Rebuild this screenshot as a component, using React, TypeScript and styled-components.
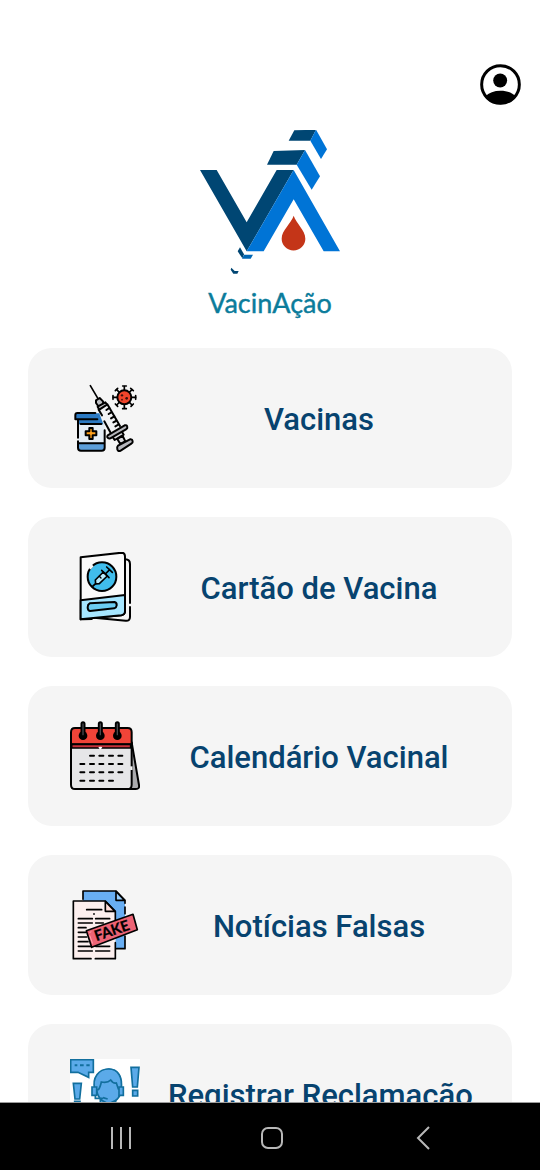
import React from 'react';
import styled, { createGlobalStyle } from 'styled-components';

const GlobalStyle = createGlobalStyle`
  *, *::before, *::after { box-sizing: border-box; }
  body { margin: 0; background: #ffffff; font-family: Roboto, sans-serif; }
`;

const Screen = styled.div`
  display: flex;
  flex-direction: column;
  height: 100vh;
  background: #ffffff;
`;

const Content = styled.main`
  flex: 1;
  min-height: 0;
  overflow-y: auto;
  scrollbar-width: none;
  padding: 64px 28px 28px;
`;

const TopBar = styled.header`
  display: flex;
  justify-content: flex-end;
  margin-right: -9px;
`;

const IconButton = styled.button`
  display: flex;
  padding: 0;
  border: 0;
  background: none;
  cursor: pointer;
`;

const Brand = styled.div`
  display: flex;
  flex-direction: column;
  align-items: center;
  gap: 12px;
  margin: 25px 0 29px;
`;

const BrandName = styled.h1`
  margin: 0;
  font: 400 27px/32px Lato, sans-serif;
  color: #0b7c9b;
  -webkit-text-stroke: 0.4px #0b7c9b;
`;

const Menu = styled.nav`
  display: flex;
  flex-direction: column;
  gap: 29px;
`;

const Card = styled.button`
  display: flex;
  align-items: center;
  gap: 28px;
  width: 100%;
  height: 140px;
  padding: 0 42px;
  border: 0;
  border-radius: 24px;
  background: #f5f5f5;
  cursor: pointer;
`;

const CardIcon = styled.svg`
  flex: none;
  width: 70px;
  height: 70px;
`;

const CardLabel = styled.span`
  flex: 1;
  padding-top: 4px;
  text-align: center;
  white-space: nowrap;
  font: 500 31px/36px Roboto, sans-serif;
  color: #07436f;
`;

const SystemBar = styled.footer`
  display: flex;
  flex: none;
  height: 68px;
  padding: 0 41px 0 45px;
  border-top: 1px solid #9b9b9b;
  background: #000000;
`;

const SystemButton = styled(IconButton)`
  flex: 1;
  align-items: center;
  justify-content: center;
  padding-top: 3px;
`;

const ProfileIcon = () => (
  <svg width="41" height="41" viewBox="45 43 124 124" aria-hidden="true">
    <defs>
      <clipPath id="profile-ring"><circle cx="107" cy="105" r="60" /></clipPath>
    </defs>
    <circle cx="107" cy="105" r="57" fill="#fff" stroke="#000" strokeWidth="9" />
    <circle cx="106" cy="93" r="21" />
    <path d="M60 142C72 130 88 124 107 124S142 130 154 142L140 170H74Z" clipPath="url(#profile-ring)" />
  </svg>
);

const Logo = () => (
  <svg width="140" height="145" viewBox="30 30 420 435" aria-hidden="true">
    <path fill="#004673" d="M30 150H80L170 307L260 150H311L170 394Z" />
    <path fill="#0074d6" d="M311 150L450 394H401L311 238L221 394H170Z" />
    <path fill="#004673" d="M251 93L345 90L320 134H231Z" />
    <path fill="#0074d6" d="M345 90L390 169L365 209L320 134Z" />
    <path fill="#004673" d="M313 31L378 29L361 62H296Z" />
    <path fill="#0074d6" d="M378 29L411 88L393 117L361 62Z" />
    <path fill="#c43518" d="M311 287C304 310 275 330 275 356A35.500 35.500 0 0 0 346 356C346 330 318 310 311 287Z" />
    <path fill="#004673" d="M150 382L162 403L157 415L143 394Z" />
    <path fill="#0067b5" d="M162 404H189L182 416H156Z" />
    <path fill="#004673" d="M124 443L134 453H146L142 461H130L122 449Z" />
  </svg>
);

const VaccineIcon = () => (
  <CardIcon viewBox="30 24 210 210" aria-hidden="true">
    <path d="M54 134H134V220Q134 227 127 227H61Q54 227 54 220Z" fill="#e5edf5" />
    <path d="M54 203H134V219Q134 227 126 227H62Q54 227 54 219Z" fill="#5c9fdb" />
    <path d="M46 115H118L130 148H54V133H46Z" fill="#2b79c2" />
    <g fill="none" stroke="#000" strokeWidth="6" strokeLinecap="round" strokeLinejoin="round">
      <path d="M106 114H52Q46 114 46 120V133H112M54 135V188M54 199V218Q54 227 63 227H125Q134 227 134 218V166M62 147H124M57 205H132" />
      <path d="M88 159H98V169H109V181H98V192H88V181H77V169H88Z" fill="#ffa01c" />
    </g>
    <path d="M115 103L147 84L187 151L146 173Z" fill="#f1f2f4" />
    <g stroke="#000" strokeWidth="6" strokeLinecap="round" strokeLinejoin="round">
      <path d="M91 32L114 71" fill="none" strokeWidth="5" />
      <path d="M108 76L119 69L129 79L130 87L116 95L108 84Z" fill="#bfc1c5" />
      <path d="M113 95L136 82L141 89L118 104Z" fill="#c7c8cc" />
      <path d="M116 104L126 121M133 139L151 172M142 88L180 153" fill="none" />
      <path d="M139 105L148 99M146 117L153 113M153 130L163 124M160 142L168 138M166 154L175 149" fill="none" />
      <path d="M156 183L184 167L191 179L164 195Z" fill="#dddde0" />
      <path d="M143 181L194 151Q201 149 202 156Q203 160 198 163L151 190Q145 192 142 187Q141 183 143 181Z" fill="#b5b6bc" />
      <path d="M172 192L188 183L196 199L181 207Z" fill="#dadade" />
      <path d="M174 212L210 193Q217 192 218 198Q219 203 214 206L182 227Q175 231 172 223Q170 216 174 212Z" fill="#b5b6bc" />
      <path d="M193 35V100M160 67H227M170 44L216 90M216 44L170 90" fill="none" strokeWidth="5" />
      <path d="M188 33H199M188 101H199M159 62V73M227 62V73M166 47L173 40M212 40L220 47M166 87L173 94M213 94L220 87" fill="none" strokeWidth="5" />
      <circle cx="193" cy="67" r="21" fill="#f0452b" />
    </g>
    <g fill="#35110c"><circle cx="186" cy="61" r="3.500" /><circle cx="186" cy="74" r="2.500" /><circle cx="200" cy="70" r="4" /></g>
  </CardIcon>
);

const CardBookIcon = () => (
  <CardIcon viewBox="30 27 210 210" aria-hidden="true">
    <g stroke="#000" strokeWidth="6" strokeLinecap="round" strokeLinejoin="round">
      <path d="M196 49Q210 50 210 63V180M210 192V222Q210 234 197 233L110 225" fill="none" />
      <path d="M62 43L185 29Q195 29 195 41V205Q195 215 184 217L62 229Z" fill="#fafafa" />
      <path d="M62 172L195 156V205Q195 215 184 217L62 229Z" fill="#a6e6ff" />
      <circle cx="126" cy="101" r="43" fill="#40bdec" />
      <path d="M89 181L163 177Q171 179 170 187Q169 194 163 196L90 204Q83 203 83 193Q83 184 89 181Z" fill="#6bcdf2" />
      <path d="M69 229L95 228" fill="none" />
    </g>
    <path d="M89 77L98 67" stroke="#fafafa" strokeWidth="8" fill="none" />
    <g stroke="#000" strokeWidth="5" strokeLinecap="round" strokeLinejoin="round">
      <path d="M106 111L130 87L142 99L118 122L107 123Z" fill="#b8edff" />
      <path d="M107 122L99 129M125 82L147 104M136 93L149 80M140 72L157 88" fill="none" />
      <path d="M118 100L123 105" fill="none" strokeWidth="4" />
    </g>
  </CardIcon>
);

const CalendarIcon = () => (
  <CardIcon viewBox="30 27 210 210" aria-hidden="true">
    <g stroke="#000" strokeWidth="6" strokeLinecap="round" strokeLinejoin="round">
      <path d="M215 91L237 219Q239 231 228 231H205Z" fill="#aaaaad" />
      <path d="M33 93H215V218Q215 231 203 231H45Q33 231 33 218Z" fill="#e6e6e8" />
      <path d="M33 97V61Q33 48 45 48H203Q215 48 215 61V97Z" fill="#f04438" />
      <path d="M35 97H212V108H35Z" fill="#c6313a" strokeWidth="5" />
      <path d="M90 131H102M118 131H130M147 131H159M175 131H187M61 156H73M90 156H102M118 156H130M147 156H159M175 156H187M61 181H73M90 181H102M118 181H130M147 181H159M175 181H187M61 206H73M90 206H102M118 206H130M147 206H159" fill="none" />
    </g>
    <path d="M115 105Q121 103 127 105L123 112H119Z" fill="#fff" />
    <path d="M214 163V174" stroke="#f5f5f5" strokeWidth="7" />
    {[69, 121, 172].map((x) => (
      <g key={x}>
        <circle cx={x} cy="71" r="13" fill="#000" />
        <path d={`M${x} 35V69`} stroke="#000" strokeWidth="15" strokeLinecap="round" />
        <path d={`M${x} 36V68`} stroke="#46494d" strokeWidth="4" strokeLinecap="round" />
      </g>
    ))}
  </CardIcon>
);

const FakeNewsIcon = () => (
  <CardIcon viewBox="30 23 210 210" aria-hidden="true">
    <g stroke="#000" strokeWidth="5" strokeLinecap="round" strokeLinejoin="round">
      <path d="M69 26H168L195 54V199H166V90L136 56H69Z" fill="#68aef3" stroke="none" />
      <path d="M69 51V26H168L195 54V63M195 74V94M195 161V199H170" fill="none" />
      <path d="M168 27V54H194Z" fill="#9bd0ff" />
      <path d="M40 56H136L166 87V229H40Z" fill="#fcefee" stroke="none" />
      <path d="M93 229H40V56H136L166 87V116M166 181V229H106" fill="none" />
      <path d="M136 57V87H165Z" fill="#ffdbd6" />
      <path d="M80 82H125M101 95H103M55 109H97M107 109H149M55 122H97M107 122H130M55 136H78M55 150H78M55 164H80M55 178H84M55 192H97M55 206H97M107 206H149M107 192H149" fill="none" />
      <path d="M79 145L219 96L232 142L95 195Z" fill="#ed6375" />
    </g>
    <path d="M88 151L94 148M89 159L98 184" stroke="#ffa0aa" strokeWidth="3" fill="none" />
    <text x="156" y="160" transform="rotate(-19 156 146)" textAnchor="middle" fontFamily="Lato, sans-serif" fontWeight="700" fontSize="44" stroke="#000" strokeWidth="1">FAKE</text>
  </CardIcon>
);

const ComplaintIcon = () => (
  <CardIcon viewBox="150 130 210 210" aria-hidden="true">
    <path d="M150 128H360V340H150Z" fill="#fff" />
    <g fill="#5baae9" stroke="#126f9e" strokeWidth="5" strokeLinejoin="miter">
      <path d="M152 132H220V170H206V185L174 170H152Z" />
      <path d="M164 149H172M180 149H191M199 149H209" strokeWidth="6" />
      <path d="M160 203H184L179 250H165Z" />
      <path d="M164 257H180V274H164Z" />
      <path d="M333 155H357L352 214H338Z" />
      <path d="M338 224H353V241H338Z" />
      <path d="M241 252V285H214V320H312V285H287V252Z" />
      <path d="M230 210Q228 162 267 160Q304 162 304 210V222Q300 258 264 263Q234 254 230 224Z" />
      <path d="M224 221C216 185 236 160 266 160C295 160 309 186 303 220H295L289 202Q279 204 272 193Q263 203 244 199Q240 217 235 222Z" />
      <path d="M216 214H230V239H216ZM297 214H310V239H297Z" />
      <path d="M226 239V248H249M249 246L263 250" fill="none" />
    </g>
  </CardIcon>
);

const items = [
  { label: 'Vacinas', Icon: VaccineIcon },
  { label: 'Cartão de Vacina', Icon: CardBookIcon },
  { label: 'Calendário Vacinal', Icon: CalendarIcon },
  { label: 'Notícias Falsas', Icon: FakeNewsIcon },
  { label: 'Registrar Reclamação', Icon: ComplaintIcon },
];

export default function App() {
  return (
    <Screen>
      <GlobalStyle />
      <Content>
        <TopBar>
          <IconButton type="button" aria-label="Perfil"><ProfileIcon /></IconButton>
        </TopBar>
        <Brand>
          <Logo />
          <BrandName>VacinAção</BrandName>
        </Brand>
        <Menu>
          {items.map(({ label, Icon }) => (
            <Card key={label} type="button">
              <Icon />
              <CardLabel>{label}</CardLabel>
            </Card>
          ))}
        </Menu>
      </Content>
      <SystemBar>
        <SystemButton type="button" aria-label="Recentes">
          <svg width="22" height="24" viewBox="0 0 22 24" fill="none" stroke="#b8b8b8" strokeWidth="2">
            <path d="M2 1V23M11 1V23M20 1V23" />
          </svg>
        </SystemButton>
        <SystemButton type="button" aria-label="Início">
          <svg width="24" height="24" viewBox="0 0 24 24" fill="none" stroke="#b8b8b8" strokeWidth="2">
            <rect x="2" y="2" width="20" height="20" rx="6" />
          </svg>
        </SystemButton>
        <SystemButton type="button" aria-label="Voltar">
          <svg width="14" height="24" viewBox="0 0 14 24" fill="none" stroke="#b8b8b8" strokeWidth="2">
            <path d="M13 1L2 12L13 23" />
          </svg>
        </SystemButton>
      </SystemBar>
    </Screen>
  );
}
